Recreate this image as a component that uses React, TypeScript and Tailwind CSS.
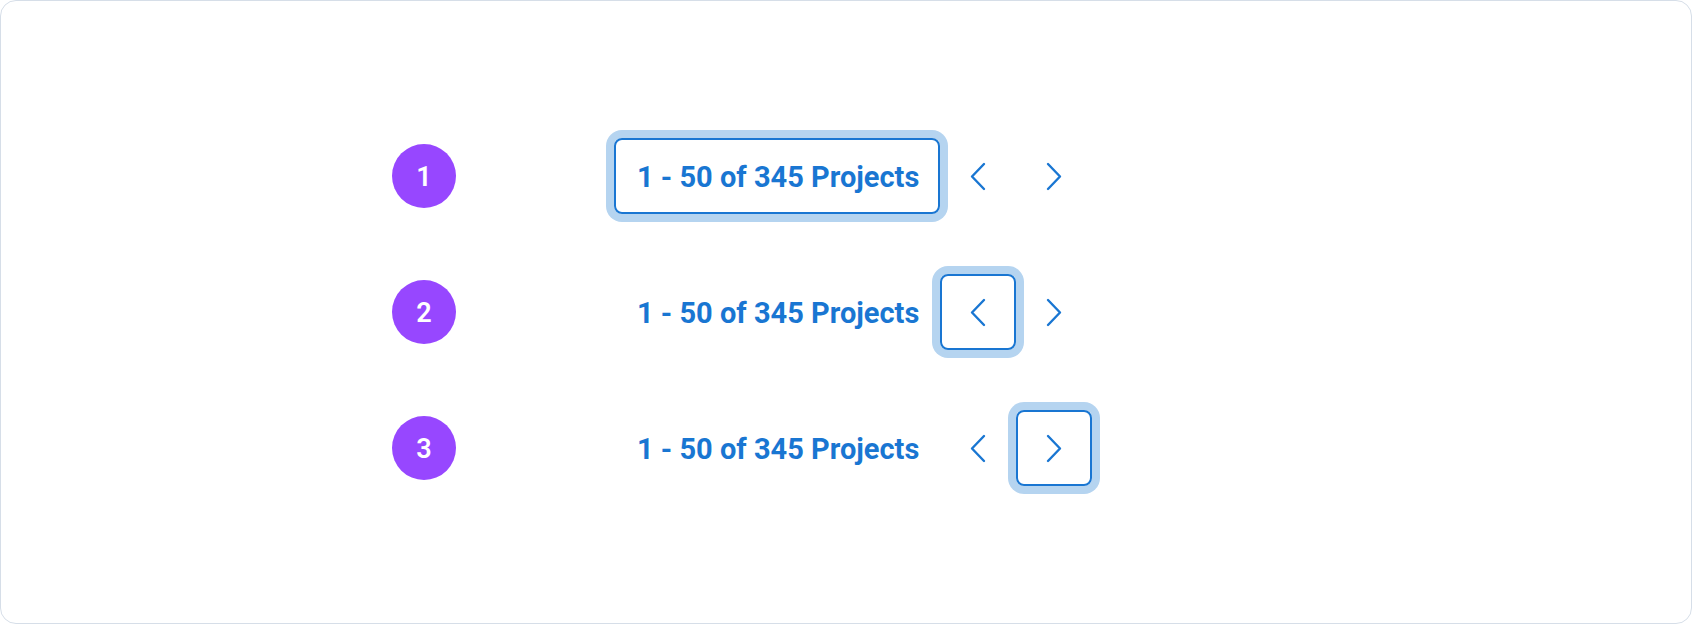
import React from "react";

const Chevron = ({ dir }: { dir: "left" | "right" }) => (
  <svg width="18" height="29" viewBox="0 0 18 29" fill="none">
    <path
      d={dir === "left" ? "M15 2 L3 14.5 L15 27" : "M3 2 L15 14.5 L3 27"}
      stroke="#1976d2"
      strokeWidth="2.4"
      strokeLinecap="round"
      strokeLinejoin="round"
    />
  </svg>
);

const Row = ({ n, focus }: { n: number; focus: number }) => (
  <div className="flex items-center h-[76px]">
    <div className="w-16 h-16 rounded-full bg-[#9747ff] flex items-center justify-center pt-[3px] text-white text-[27px] font-semibold leading-none">
      {n}
    </div>
    <div
      className={
        "ml-[158px] w-[326px] h-[76px] rounded-lg border-2 flex items-center pl-[21px] pt-[3px] text-[#1976d2] text-[29px] font-bold leading-none whitespace-nowrap " +
        (focus === 0 ? "border-[#1976d2] ring-8 ring-[#b5d4f0]" : "border-transparent")
      }
    >
      1 - 50 of 345 Projects
    </div>
    <div
      className={
        "w-[76px] h-[76px] rounded-lg border-2 flex items-center justify-center " +
        (focus === 1 ? "border-[#1976d2] ring-8 ring-[#b5d4f0]" : "border-transparent")
      }
    >
      <Chevron dir="left" />
    </div>
    <div
      className={
        "w-[76px] h-[76px] rounded-lg border-2 flex items-center justify-center " +
        (focus === 2 ? "border-[#1976d2] ring-8 ring-[#b5d4f0]" : "border-transparent")
      }
    >
      <Chevron dir="right" />
    </div>
  </div>
);

export default function App() {
  return (
    <div
      className="w-[1692px] h-[624px] bg-white"
      style={{ fontFamily: "Roboto, 'Noto Sans', sans-serif" }}
    >
      <div className="w-full h-full rounded-2xl border border-[#d6dee8] flex flex-col justify-center gap-[60px] pl-[391px]">
        <Row n={1} focus={0} />
        <Row n={2} focus={1} />
        <Row n={3} focus={2} />
      </div>
    </div>
  );
}
